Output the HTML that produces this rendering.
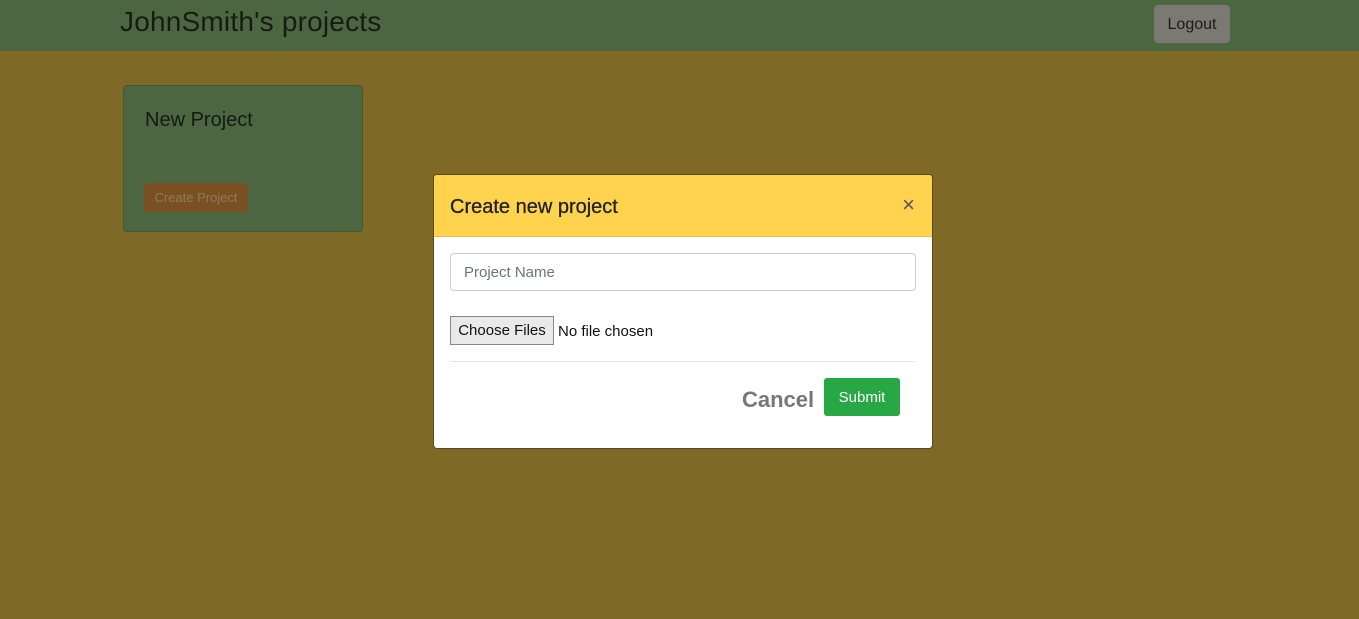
<!DOCTYPE html>
<html><head><style>
*{box-sizing:border-box}
body{margin:0;width:1359px;height:619px;background:#7f6926;font-family:"Liberation Sans",sans-serif;position:relative;overflow:hidden}
.nav{position:absolute;left:0;top:0;width:1359px;height:51px;background:#4b6640}
.title{position:absolute;left:120px;top:6px;font-size:28px;color:#1a1a14;letter-spacing:0.2px}
.logout{position:absolute;left:1154px;top:5px;width:76px;height:38px;background:#7a7a73;border-radius:4px;font-size:16px;color:#1a1a1a;text-align:center;line-height:40px}
.card{position:absolute;left:123px;top:85px;width:240px;height:147px;background:#4b6640;border:1px solid #41592f;border-radius:4px}
.card h3{position:absolute;left:21px;top:23px;margin:0;font-weight:normal;font-size:20px;color:#161a12}
.cbtn{position:absolute;left:20px;top:97px;width:104px;height:29px;background:#7a5023;border-radius:3px;color:#8e7a5c;font-size:13px;line-height:29px;text-align:center}
.modal{position:absolute;left:433px;top:174px;width:500px;height:275px;background:#fff;border-radius:4px;overflow:hidden;border:1px solid #5a4a1a}
.mh{height:62px;background:#ffd34d;position:relative;border-bottom:1px solid #e8c048}
.mh span{position:absolute;left:16px;top:21px;font-size:20px;color:#222;-webkit-text-stroke:0.3px #222}
.x{position:absolute;right:17px;top:17px;font-size:22px;color:#555}
.inp{position:absolute;left:16px;top:78px;width:466px;height:38px;border:1px solid #ccd;border-radius:4px;font-size:15px;color:#6c757d;padding:10px 13px}
.fb{position:absolute;left:16px;top:141px;width:104px;height:29px;border:1px solid #888;background:#e9e9e9;font-size:15px;line-height:28px;text-align:center;color:#111}
.nf{position:absolute;left:124px;top:148px;font-size:15px;color:#111}
.hr{position:absolute;left:16px;top:186px;width:466px;border-top:1px solid #e6e6e6}
.cancel{position:absolute;left:308px;top:212px;font-size:22px;font-weight:bold;color:#777}
.sub{position:absolute;left:390px;top:203px;width:76px;height:38px;background:#28a745;border-radius:3px;color:#fff;font-size:15px;line-height:40px;text-align:center}
</style></head><body>
<div class="nav"></div>
<div class="title">JohnSmith's projects</div>
<div class="logout">Logout</div>
<div class="card"><h3>New Project</h3><div class="cbtn">Create Project</div></div>
<div class="modal">
<div class="mh"><span>Create new project</span><div class="x">×</div></div>
<div class="inp">Project Name</div>
<div class="fb">Choose Files</div><div class="nf">No file chosen</div>
<div class="hr"></div>
<div class="cancel">Cancel</div><div class="sub">Submit</div>
</div>
</body></html>
